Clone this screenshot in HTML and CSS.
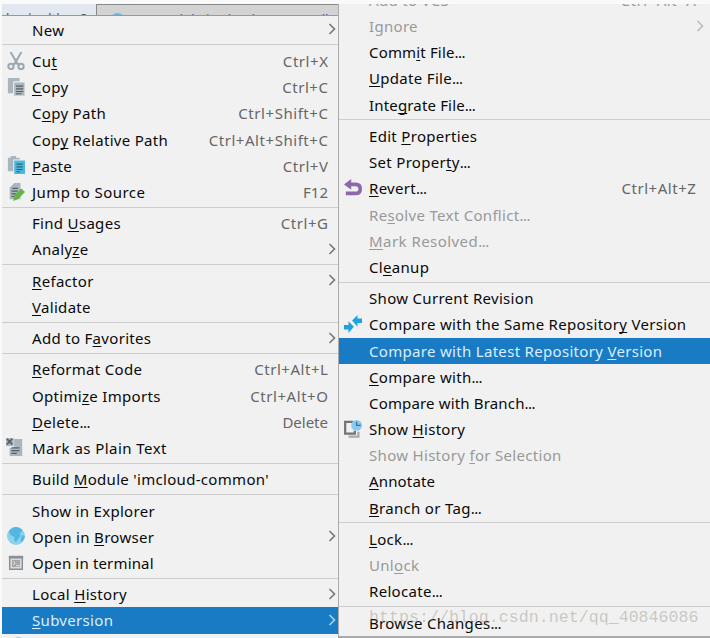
FILE: index.html
```html
<!DOCTYPE html>
<html lang="en">
<head>
<meta charset="utf-8">
<title>Subversion menu</title>
<link rel="stylesheet" href="styles.css">
</head>
<body>
<div class="screen">
<div class="left">
<div class="tabs"><div class="tab"><span class="tab-text">l&nbsp;&nbsp;&nbsp;&nbsp; | &nbsp;&nbsp;dtl&nbsp;&nbsp;&nbsp;&nbsp;&nbsp;&nbsp;8</span></div><div class="tab tab-dark"><i class="dot"></i><span class="tab-text blue">module-imcloud&nbsp;&nbsp;&nbsp;&nbsp;&nbsp;&nbsp;&nbsp;&nbsp;controller</span></div></div>
<div class="menu">
<div class="row"><span class="label">New</span><svg class="arrow" viewBox="0 0 8 12"><path d="M1.5 1 6.5 6l-5 5"/></svg></div>
<div class="sep"></div>
<div class="row"><svg class="icon" viewBox="0 0 20 20"><g fill="none" stroke="#9da9b1" stroke-width="2.3"><path d="M4 0 12 14M16 0 8 14"/><circle cx="4.4" cy="16" r="2.9"/><circle cx="15.600" cy="16" r="2.900"/><path d="m7 14 3-3 3 3"/></g></svg><span class="label">Cu<u>t</u></span><span class="key combo">Ctrl+X</span></div>
<div class="row"><svg class="icon" viewBox="0 0 20 20"><path fill="#aab5bd" d="M1 0h13v4H7v13H1z"/><path fill="#aab5bd" stroke="#f1f1f1" d="M7.500 4.500h12.500v15.500H7.500z"/><path stroke="#596166" stroke-width="1.300" d="M10 9h8M10 12h8M10 15h8M10 17.500h6"/></svg><span class="label"><u>C</u>opy</span><span class="key combo">Ctrl+C</span></div>
<div class="row"><span class="label">C<u>o</u>py Path</span><span class="key combo">Ctrl+Shift+C</span></div>
<div class="row"><span class="label">Cop<u>y</u> Relative Path</span><span class="key combo">Ctrl+Alt+Shift+C</span></div>
<div class="row"><svg class="icon" viewBox="0 0 20 20"><path fill="#aab5bd" d="M1 2h3V0h6v2h4v2H7v13H1z"/><path fill="#4db8de" d="M8 5h12v15H8z"/><path stroke="#28657c" stroke-width="1.300" d="M10.500 9h7M10.500 12h7M10.500 15h7M10.500 17.500h4"/></svg><span class="label"><u>P</u>aste</span><span class="key combo">Ctrl+V</span></div>
<div class="row"><svg class="icon" viewBox="0 0 20 20"><path fill="#aab5bd" d="M8 0h7v18H3V5z"/><path fill="#edf0f1" d="M3 5V0h5z"/><path stroke="#596166" stroke-width="1.300" d="M6 6h6M5 9h7M5 12h5M5 15h3"/><path fill="#62b543" d="m16 6 4 4-8 8-5 2 1-6z"/></svg><span class="label wide">Jump to Source</span><span class="key">F12</span></div>
<div class="sep"></div>
<div class="row"><span class="label">Find <u>U</u>sages</span><span class="key combo">Ctrl+G</span></div>
<div class="row"><span class="label">Analy<u>z</u>e</span><svg class="arrow" viewBox="0 0 8 12"><path d="M1.500 1 6.500 6l-5 5"/></svg></div>
<div class="sep"></div>
<div class="row"><span class="label"><u>R</u>efactor</span><svg class="arrow" viewBox="0 0 8 12"><path d="M1.500 1 6.500 6l-5 5"/></svg></div>
<div class="row"><span class="label"><u>V</u>alidate</span></div>
<div class="sep"></div>
<div class="row"><span class="label">Add to F<u>a</u>vorites</span><svg class="arrow" viewBox="0 0 8 12"><path d="M1.500 1 6.500 6l-5 5"/></svg></div>
<div class="sep"></div>
<div class="row"><span class="label"><u>R</u>eformat Code</span><span class="key combo">Ctrl+Alt+L</span></div>
<div class="row"><span class="label">Optimi<u>z</u>e Imports</span><span class="key combo">Ctrl+Alt+O</span></div>
<div class="row"><span class="label"><u>D</u>elete<span class="dots">...</span></span><span class="key">Delete</span></div>
<div class="row"><svg class="icon mark" viewBox="0 0 20 20"><path fill="#aab5bd" d="M9 1h9v19H4v-9h5z"/><path fill="#aab5bd" d="M0 0h8.500v9H0z"/><path stroke="#596166" stroke-width="2" d="m1 1 6 6M7 1 1 7"/><path stroke="#596166" stroke-width="1.500" d="M6 11h9M6 14h9M6 17h6"/></svg><span class="label wide">Mark as Plain Text</span></div>
<div class="sep"></div>
<div class="row"><span class="label">Build <u>M</u>odule 'imcloud-common'</span></div>
<div class="sep"></div>
<div class="row"><span class="label">Show in Explorer</span></div>
<div class="row"><svg class="icon" viewBox="0 0 20 20"><circle cx="10" cy="10" r="10" fill="#8fd0eb"/><path fill="#52b8e1" d="M2 5q3-5 8-5 4 0 7 3l-1 3-2 1 1 3-3 4-2 3-2-2v-4l-4-2z"/><path fill="#52b8e1" d="m17 9 3 1q-1 5-4 7l-1-3z"/></svg><span class="label">Open in <u>B</u>rowser</span><svg class="arrow" viewBox="0 0 8 12"><path d="M1.500 1 6.500 6l-5 5"/></svg></div>
<div class="row"><svg class="icon" viewBox="0 0 20 20"><path fill="#dce0e2" stroke="#8b8f92" stroke-width="1.600" d="M3 3h14v14H3z"/><path fill="#a4a8ab" d="M5.500 6.500h9v8h-9z"/><path fill="#8b8f92" d="M2 2h16v3H2z"/><path fill="none" stroke="#eee" d="m7 8 2 2-2 2m3 1h4"/></svg><span class="label tight">Open in terminal</span></div>
<div class="sep"></div>
<div class="row"><span class="label">Local <u>H</u>istory</span><svg class="arrow" viewBox="0 0 8 12"><path d="M1.500 1 6.500 6l-5 5"/></svg></div>
<div class="row selected"><span class="label"><u>S</u>ubversion</span><svg class="arrow" viewBox="0 0 8 12"><path d="M1.500 1 6.500 6l-5 5"/></svg></div>
<div class="row"><svg class="icon" viewBox="0 0 20 20"><circle cx="13" cy="7" r="7" fill="#aebfc8"/></svg></div>
</div>
</div>
<div class="submenu">
<div class="menu menu-right">
<div class="row off"><span class="label">Add to VCS</span><span class="key combo">Ctrl+Alt+A</span></div>
<div class="row off"><span class="label">Ignore</span><svg class="arrow" viewBox="0 0 8 12"><path d="M1.500 1 6.500 6l-5 5"/></svg></div>
<div class="row"><span class="label tight">Comm<u>i</u>t File<span class="dots">...</span></span></div>
<div class="row"><span class="label"><u>U</u>pdate File<span class="dots">...</span></span></div>
<div class="row"><span class="label tight">Inte<u>g</u>rate File<span class="dots">...</span></span></div>
<div class="sep"></div>
<div class="row"><span class="label">Edit <u>P</u>roperties</span></div>
<div class="row"><span class="label">Set Proper<u>t</u>y<span class="dots">...</span></span></div>
<div class="row"><svg class="icon" viewBox="0 0 20 20"><path fill="none" stroke="#8e68a9" stroke-width="4" d="M5 6h8q5 0 5 5t-5 5H2"/><path fill="#8e68a9" d="M8 0v12L0 6z"/></svg><span class="label"><u>R</u>evert<span class="dots">...</span></span><span class="key combo">Ctrl+Alt+Z</span></div>
<div class="row off"><span class="label">Re<u>s</u>olve Text Conflict<span class="dots">...</span></span></div>
<div class="row off"><span class="label wide"><u>M</u>ark Resolved<span class="dots">...</span></span></div>
<div class="row"><span class="label">Cl<u>e</u>anup</span></div>
<div class="sep"></div>
<div class="row"><span class="label">Show Current Revision</span></div>
<div class="row"><svg class="icon" viewBox="0 0 20 20"><path fill="#1fa3dc" d="M0 11h5V7l6 6-6 7v-4H0zM20 4h-5V0L9 6l6 7V9h5z"/></svg><span class="label">Compare with the Same Repositor<u>y</u> Version</span></div>
<div class="row selected"><span class="label">Compare with Latest Repository <u>V</u>ersion</span></div>
<div class="row"><span class="label"><u>C</u>ompare with<span class="dots">...</span></span></div>
<div class="row"><span class="label tight">Compare with Branch<span class="dots">...</span></span></div>
<div class="row"><svg class="icon" viewBox="0 0 20 20"><path fill="none" stroke="#a9a9a9" stroke-width="2.500" d="M5 18.500h11V13"/><path fill="none" stroke="#737373" stroke-width="2.500" d="M10 2H1.300v13H12v-3"/><circle cx="14" cy="6" r="6" fill="#8bc9ee"/><path fill="none" stroke="#38749b" stroke-width="1.500" d="M14 2v4h4.500"/></svg><span class="label">Show <u>H</u>istory</span></div>
<div class="row off"><span class="label">Show History <u>f</u>or Selection</span></div>
<div class="row"><span class="label tight"><u>A</u>nnotate</span></div>
<div class="row"><span class="label"><u>B</u>ranch or Tag<span class="dots">...</span></span></div>
<div class="sep"></div>
<div class="row"><span class="label"><u>L</u>ock<span class="dots">...</span></span></div>
<div class="row off"><span class="label">Unl<u>o</u>ck</span></div>
<div class="row"><span class="label">Relocate<span class="dots">...</span></span></div>
<div class="sep"></div>
<div class="row"><span class="label">Browse Changes<span class="dots">...</span></span></div>
</div>
</div>
<div class="watermark">https://blog.csdn.net/qq_40846086</div>
</div>
</body>
</html>
```
FILE: styles.css
```css
* { box-sizing: border-box; }
body { margin: 0; background: #fafafa; font: 15px/26.2px "Noto Sans", "Open Sans", sans-serif; color: #0a0a0a; overflow: hidden; }
.screen { position: relative; display: flex; width: 710px; height: 638px; padding: 4px 0 0 2px; overflow: hidden; }
.left { width: 336px; height: 634px; overflow: hidden; background: #f1f1f1; }
.tabs { display: flex; height: 12px; border-bottom: 1px solid #999; background: #e3e7ef; overflow: hidden; }
.tab { width: 94px; height: 11px; overflow: hidden; white-space: nowrap; font-size: 13px; line-height: 29px; padding-left: 4px; color: #555; }
.tab-dark { flex: 1; display: flex; background: #d3d3d3; border-left: 1px solid #888; border-top: 1px solid #888; padding-left: 13px; }
.blue { color: #4352a4; margin-left: 30px; }
.dot { width: 15px; height: 15px; margin-top: 8px; border-radius: 50%; background: #67bdd9; flex: none; }
.menu { display: flex; flex-direction: column; }
.left .menu { padding-top: 0.7px; }
.row { display: grid; grid-template-columns: 30px 1fr auto; height: 26.2px; flex: none; align-items: center; white-space: nowrap; padding-right: 10px; }
.icon { grid-column: 1; grid-row: 1; width: 18px; height: 18px; margin-left: 5px; margin-top: -1px; }
.mark { margin-left: 4px; margin-top: -3px; }
.label { grid-column: 2; grid-row: 1; letter-spacing: 0.31px; }
.wide { letter-spacing: 0.45px; }
.tight { letter-spacing: 0.16px; }
.dots { letter-spacing: -0.5px; }
.key { grid-column: 3; grid-row: 1; color: #666; }
.combo { letter-spacing: 0.55px; margin-right: -0.5px; }
u { text-decoration-thickness: 1px; text-underline-offset: 2px; text-decoration-skip-ink: none; }
.arrow { grid-column: 3; grid-row: 1; width: 8px; height: 12px; margin-right: -9px; margin-top: -1px; fill: none; stroke: #777; stroke-width: 1.6; }
.sep { height: 3.6px; margin-top: 1.5px; flex: none; border-top: 1px solid #cdcdcd; }
.selected { background: #197bc4; color: #dceeff; }
.selected .arrow { stroke: #a9d4f5; }
.submenu { width: 372px; height: 634px; overflow: hidden; border-left: 1px solid #aaa; border-bottom: 2px solid #aaa; background: #f1f1f1; }
.menu-right { margin-top: -17.1px; }
.menu-right .row { padding-right: 14px; }
.off, .off .key { color: #999; }
.off .arrow { stroke: #bbb; }
.watermark { position: absolute; left: 369px; top: 604px; font: 16.65px/28px "Liberation Mono", monospace; color: rgba(130, 130, 115, .38); white-space: nowrap; }
```
